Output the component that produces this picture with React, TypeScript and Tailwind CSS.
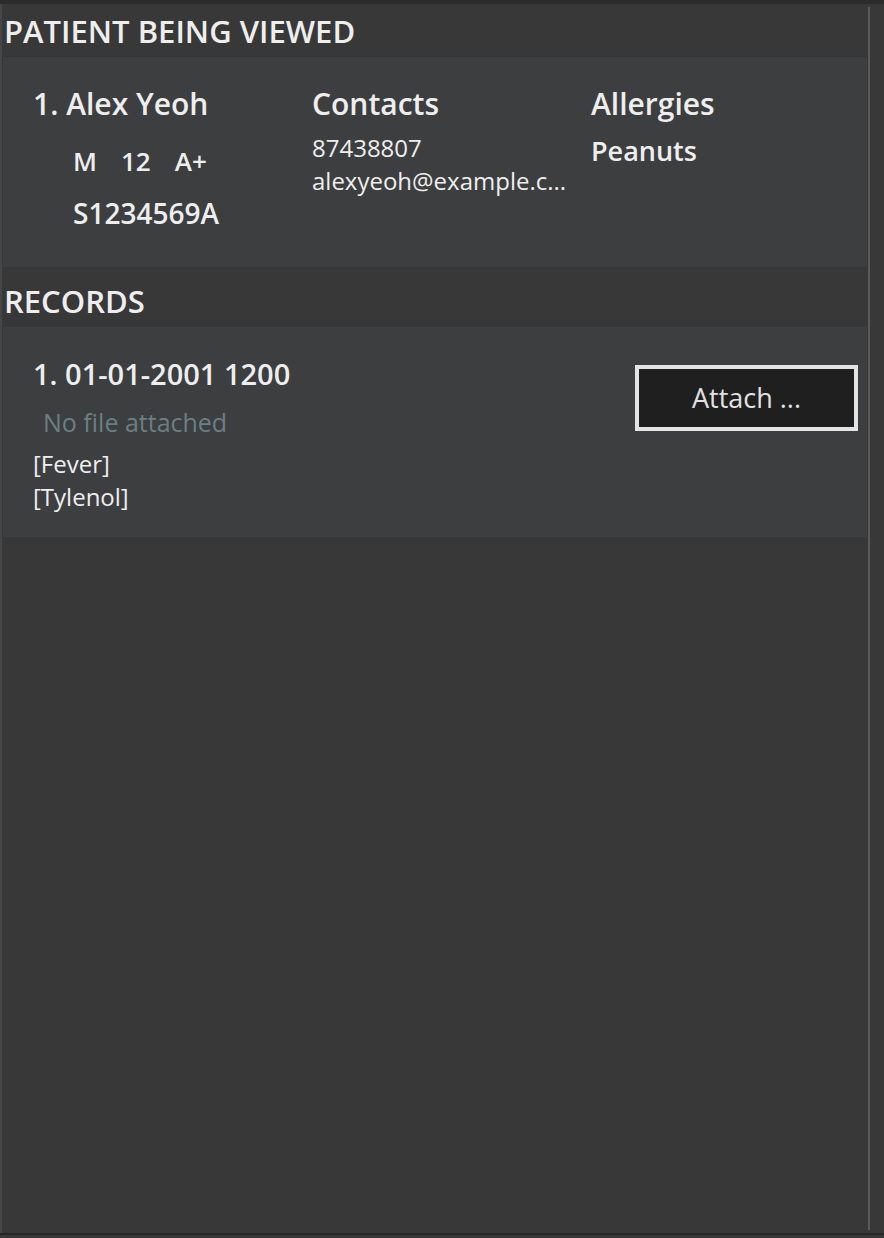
import React from "react";

export default function App() {
  const font = { fontFamily: '"Open Sans", "Noto Sans", sans-serif' };
  return (
    <div
      className="relative w-[884px] h-[1238px] bg-[#383838] overflow-hidden text-[#eeeeee]"
      style={font}
    >
      <div className="h-[4px] bg-[#2b2b2b]" />
      <div className="absolute left-0 top-[4px] bottom-[5px] w-[2px] bg-[#464646]" />
      <div className="absolute left-[868px] top-[7px] bottom-[8px] w-[2px] bg-[#5a5a5a]" />
      <div className="absolute left-0 right-0 bottom-[3px] h-[2px] bg-[#262626]" />

      <div className="flex flex-col pl-[3px] w-[867px]">
        <div className="h-[53px] pl-[1px] pt-[8px] text-[31px] font-semibold leading-[38px]">
          PATIENT BEING VIEWED
        </div>
        <div className="h-[210px] bg-[#3d3e40] pl-[30px] pt-[27px] grid grid-cols-[279px_279px_1fr]">
          <div>
            <div className="text-[30px] font-semibold leading-[40px]">1. Alex Yeoh</div>
            <div className="pl-[40px] mt-[21px] flex gap-[24px] text-[26px] font-semibold leading-[32px]">
              <span>M</span>
              <span>12</span>
              <span>A+</span>
            </div>
            <div className="pl-[40px] mt-[20px] text-[28px] font-semibold leading-[32px]">
              S1234569A
            </div>
          </div>
          <div>
            <div className="text-[30px] font-semibold leading-[40px]">Contacts</div>
            <div className="text-[24px] leading-[33px] mt-[7px]">87438807</div>
            <div className="text-[24px] leading-[33px] w-[258px] whitespace-nowrap overflow-hidden">
              alexyeoh@example.c...
            </div>
          </div>
          <div>
            <div className="text-[30px] font-semibold leading-[40px]">Allergies</div>
            <div className="text-[27px] font-semibold leading-[36px] mt-[9px]">Peanuts</div>
          </div>
        </div>

        <div className="h-[60px] pl-[1px] pt-[15px] text-[31px] font-semibold leading-[38px]">
          RECORDS
        </div>
        <div className="h-[210px] bg-[#3d3e40] pl-[30px] pr-[9px] pt-[27px] flex justify-between">
          <div>
            <div className="text-[29px] font-semibold leading-[40px]">1. 01-01-2001 1200</div>
            <div className="pl-[10px] mt-[12px] text-[25px] leading-[32px] text-[#6b7f86]">
              No file attached
            </div>
            <div className="mt-[9px] text-[24px] leading-[33px]">[Fever]</div>
            <div className="text-[24px] leading-[33px]">[Tylenol]</div>
          </div>
          <div className="pt-[11px]">
            <div className="w-[223px] h-[66px] border-[4px] border-[#e4e4e4] bg-[#1f1f1f] flex items-center justify-center text-[27px] text-[#e2e2e2]">
              Attach ...
            </div>
          </div>
        </div>
      </div>
    </div>
  );
}
